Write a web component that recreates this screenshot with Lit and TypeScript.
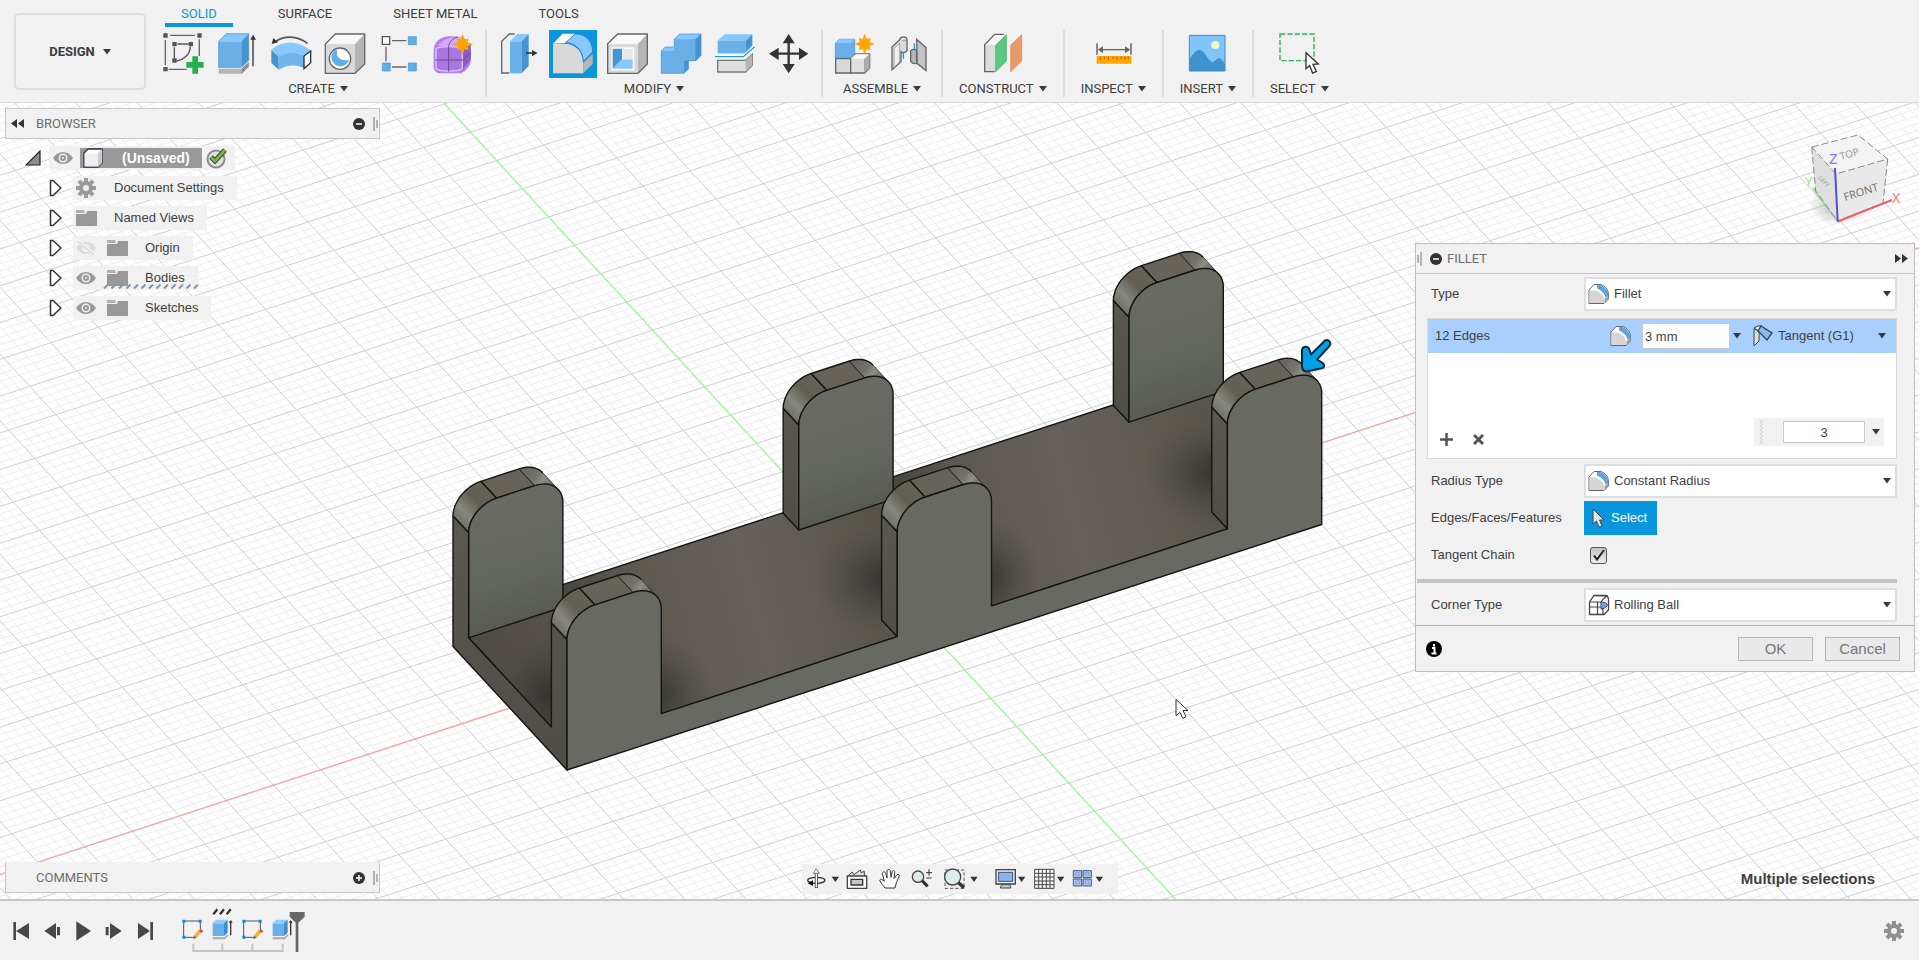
import { LitElement, html, svg, css, nothing } from "lit";
import { customElement, property, state } from "lit/decorators.js";
import { classMap } from "lit/directives/class-map.js";

type Pt = [number, number];

/* ---------- scene geometry ---------- */

const ORIGIN: Pt = [886.7, 584.4];
const AXIS_X: Pt = [47.17, -15.4];
const AXIS_Y: Pt = [26, 28.3];
const DEPTH: Pt = [-15.6, -16.8];
const EDGE: Pt = [28, -9.1];
const RISE = 25.6;
const FLOOR = 105;
const WIDTH = 94.3;
const FRONT: Pt[] = [[567, 639], [897.2, 531.2], [1227.4, 423.4]];
const BACK: Pt[] = FRONT.map(([x, y]) => [x - 98.4, y - 106.7] as Pt);

const add = (a: Pt, b: Pt): Pt => [a[0] + b[0], a[1] + b[1]];
const str = (pts: Pt[]) => pts.map((p) => `${p[0].toFixed(1)},${p[1].toFixed(1)}`).join(" ");
const rad = (d: number) => (d * Math.PI) / 180;

function gridPath(axis: Pt, across: Pt, divisions: number, skipMajor: boolean) {
  let d = "";
  for (let i = -45 * divisions; i <= 45 * divisions; i++) {
    if (skipMajor && i % divisions === 0) continue;
    const k = i / divisions;
    const x = ORIGIN[0] + across[0] * k;
    const y = ORIGIN[1] + across[1] * k;
    d += `M${(x - axis[0] * 50).toFixed(1)} ${(y - axis[1] * 50).toFixed(1)}L${(x + axis[0] * 50).toFixed(1)} ${(y + axis[1] * 50).toFixed(1)}`;
  }
  return d;
}

/* arc of the left rounded shoulder, from the vertical edge to the flat top */
function leftArc(a: Pt): Pt[] {
  const c: Pt = [a[0] + EDGE[0], a[1] + EDGE[1]];
  return Array.from({ length: 13 }, (_, i) => {
    const t = rad(180 - i * 7.5);
    return [c[0] + Math.cos(t) * EDGE[0], c[1] + Math.cos(t) * EDGE[1] - Math.sin(t) * RISE] as Pt;
  });
}

/* arc of the right rounded shoulder, down to the given angle */
function rightArc(a: Pt, end = 0): Pt[] {
  const w: Pt = [WIDTH - EDGE[0], (-(WIDTH - EDGE[0]) * 15.4) / 47.17];
  const c: Pt = [a[0] + w[0], a[1] + w[1]];
  return Array.from({ length: 13 }, (_, i) => {
    const t = rad(90 - ((90 - end) * i) / 12);
    return [c[0] + Math.cos(t) * EDGE[0], c[1] + Math.cos(t) * EDGE[1] - Math.sin(t) * RISE] as Pt;
  });
}

const shift = (pts: Pt[]) => pts.map((p) => add(p, DEPTH));
const postOutline = (a: Pt): Pt[] => {
  const r = rightArc(a);
  const end = r[r.length - 1];
  return [[a[0], a[1] + FLOOR], ...leftArc(a), ...r, [end[0], a[1] + FLOOR - 30.8]];
};

function postTop(a: Pt) {
  const l = leftArc(a);
  const r = rightArc(a, 33);
  const flat: Pt[] = [l[12], r[0]];
  return svg`
    <polygon class="edge" fill="url(#shoulderL)" points=${str([...l, ...shift(l).reverse()])}></polygon>
    <polygon class="edge" fill="#67625a" points=${str([...flat, ...shift(flat).reverse()])}></polygon>
    <polygon fill="url(#shoulderR)" points=${str([...r, ...shift(r).reverse()])}></polygon>
    <polyline class="edge" fill="none" points=${str(shift(r))}></polyline>
    <polyline class="edge thin" fill="none" points=${str([r[12], shift(r)[12]])}></polyline>`;
}

function postSide(a: Pt) {
  const b: Pt = [a[0], a[1] + FLOOR];
  return svg`<polygon class="edge" fill="url(#side)" points=${str([a, b, add(b, DEPTH), add(a, DEPTH)])}></polygon>`;
}

@customElement("cad-scene")
class CadScene extends LitElement {
  static styles = css`
    :host { display: block; }
    svg { display: block; width: 100%; height: 100%; background: #fefefe; }
    .edge { stroke: #15150f; stroke-width: 1.4; stroke-linejoin: round; }
    .thin { stroke-width: 0.7; }
    .minor { stroke: #eeeeee; stroke-width: 1; fill: none; }
    .major { stroke: #cfcfcf; stroke-width: 1; fill: none; }
  `;

  render() {
    const floor: Pt[] = [[453, 620], [567, 744], [1322, 497.5], [1208, 373.5]];
    const side: Pt[] = [
      add(BACK[0], DEPTH), BACK[0], [BACK[0][0], BACK[0][1] + FLOOR], [551.4, 726.6],
      add(FRONT[0], DEPTH), FRONT[0], [567, 769.5], [453, 646],
    ];
    const front: Pt[] = [[567, 769.5], ...FRONT.flatMap(postOutline), [1321.7, 524]];
    return html`
      <svg viewBox="0 102 1919 797" preserveAspectRatio="xMidYMid slice" role="img" aria-label="Model view">
        <defs>
          <linearGradient id="shoulderL" x1="0" y1="1" x2="0.9" y2="0">
            <stop offset="0" stop-color="#55534c"></stop>
            <stop offset="0.14" stop-color="#6c6d66"></stop>
            <stop offset="0.36" stop-color="#86877f"></stop>
            <stop offset="0.6" stop-color="#625e54"></stop>
            <stop offset="1" stop-color="#696459"></stop>
          </linearGradient>
          <linearGradient id="shoulderR" x1="0" y1="0.2" x2="1" y2="0.6">
            <stop offset="0" stop-color="#67635a"></stop>
            <stop offset="0.45" stop-color="#74746c"></stop>
            <stop offset="0.65" stop-color="#8d8e87"></stop>
            <stop offset="1" stop-color="#5d5d56"></stop>
          </linearGradient>
          <linearGradient id="side" x1="0" y1="0" x2="0" y2="1">
            <stop offset="0" stop-color="#5a5850"></stop>
            <stop offset="1" stop-color="#4f4d47"></stop>
          </linearGradient>
          <linearGradient id="face" x1="0.4" y1="0" x2="0.6" y2="1">
            <stop offset="0" stop-color="#6a6b65"></stop>
            <stop offset="0.6" stop-color="#63655f"></stop>
            <stop offset="1" stop-color="#54564f"></stop>
          </linearGradient>
          <linearGradient id="base" gradientUnits="userSpaceOnUse" x1="460" y1="640" x2="1300" y2="420">
            <stop offset="0" stop-color="#4f4b44"></stop>
            <stop offset="0.16" stop-color="#59554d"></stop>
            <stop offset="0.34" stop-color="#66615a"></stop>
            <stop offset="0.52" stop-color="#56524a"></stop>
            <stop offset="0.72" stop-color="#66615a"></stop>
            <stop offset="0.9" stop-color="#59554d"></stop>
            <stop offset="1" stop-color="#504c45"></stop>
          </linearGradient>
          <radialGradient id="dark">
            <stop offset="0" stop-color="#2f2e2b" stop-opacity="0.85"></stop>
            <stop offset="0.35" stop-color="#383733" stop-opacity="0.6"></stop>
            <stop offset="1" stop-color="#504d46" stop-opacity="0"></stop>
          </radialGradient>
          <clipPath id="floorClip"><polygon points=${str(floor)}></polygon></clipPath>
        </defs>

        <path class="minor" d=${gridPath(AXIS_X, AXIS_Y, 5, true)}></path>
        <path class="minor" d=${gridPath(AXIS_Y, AXIS_X, 5, true)}></path>
        <path class="major" d=${gridPath(AXIS_X, AXIS_Y, 1, false)}></path>
        <path class="major" d=${gridPath(AXIS_Y, AXIS_X, 1, false)}></path>
        <path d="M-60 893.6L2020 214.5" stroke="#ffa0a0" stroke-width="1.2"></path>
        <path d="M440 98.4L1190 914.5" stroke="#90ff90" stroke-width="1.2"></path>

        <polygon class="edge" fill="url(#base)" points=${str(floor)}></polygon>
        <g clip-path="url(#floorClip)">
          <ellipse cx="550" cy="694" rx="64" ry="66" fill="url(#dark)"></ellipse>
          <ellipse cx="654" cy="694" rx="62" ry="60" fill="url(#dark)"></ellipse>
          <ellipse cx="886" cy="578" rx="74" ry="58" fill="url(#dark)"></ellipse>
          <ellipse cx="984" cy="576" rx="60" ry="60" fill="url(#dark)"></ellipse>
          <ellipse cx="1216" cy="472" rx="74" ry="58" fill="url(#dark)"></ellipse>
          <ellipse cx="570" cy="590" rx="70" ry="34" fill="url(#dark)" opacity="0.4"></ellipse>
          <ellipse cx="900" cy="482" rx="80" ry="34" fill="url(#dark)" opacity="0.45"></ellipse>
        </g>

        ${BACK.map((a, i) => svg`
          ${i ? postSide(a) : nothing}
          ${postTop(a)}
          <polygon class="edge" fill="url(#face)" points=${str(postOutline(a))}></polygon>`)}

        <polygon class="edge" fill="url(#side)" points=${str(side)}></polygon>
        ${FRONT.map((a, i) => svg`${i ? postSide(a) : nothing}${postTop(a)}`)}
        <polygon class="edge" fill="#686963" points=${str(front)}></polygon>

        <path d="M1325 340 C1329 338 1332 343 1329 346 L1317 359 L1322 362 C1326 365 1324 368 1320 368 L1307 371 C1303 371 1302 369 1302 365 L1302 350 C1302 346 1307 345 1309 348 L1311 354 Z"
          fill="#00a0e8" stroke="#0b2b3c" stroke-width="2" stroke-linejoin="round"></path>
        <path d="M1176 699 L1176 715 L1180 712 L1183 718 L1186 716 L1183 710 L1188 710 Z" fill="#fff" stroke="#333" stroke-width="1"></path>
      </svg>`;
  }
}

/* ---------- shared drawings ---------- */

const caret = html`<svg class="caret" width="8" height="6" viewBox="0 0 8 6" aria-hidden="true"><path d="M0 0h8L4 5.5z" fill="#3a3a3a"></path></svg>`;

const burst = (x: number, y: number) => {
  const pts = Array.from({ length: 16 }, (_, i) => {
    const r = i % 2 ? 16 : i % 4 === 0 ? 31 : 25;
    const t = (i * Math.PI) / 8;
    return `${(x + Math.cos(t) * r).toFixed(1)},${(y + Math.sin(t) * r).toFixed(1)}`;
  });
  return svg`<polygon points=${pts.join(" ")} fill="#ffa400"></polygon>`;
};

const gearShape = (fill: string) => html`<svg width="20" height="20" viewBox="-10 -10 20 20" aria-hidden="true">
  ${[0, 45, 90, 135].map((r) => svg`<rect x="-2" y="-10" width="4" height="20" fill=${fill} transform="rotate(${r})"></rect>`)}
  <circle r="7" fill=${fill}></circle><circle r="3" fill="#f0f0f0"></circle></svg>`;

const filletIcon = html`<svg width="22" height="22" viewBox="0 0 22 22" aria-hidden="true">
  <path d="M1 20.500V7L6 1.500H12C17 2 20.500 7 20.500 12V16L16 20.500Z" fill="#fff" stroke="#666" stroke-width="1"></path>
  <path d="M1.500 20V7C9 7 15 10 16 16V20Z" fill="#d6d6d6"></path>
  <path d="M9 2C14 1 20 6 20.500 13L17 15C16 10 13 8 9 6Z" fill="#5aa5df"></path>
  <path d="M9 6C13 8 16 10 17 15" fill="none" stroke="#fff" stroke-width="1.300"></path>
  <path d="M16.500 20V16L20.500 13V16Z" fill="#a0a0a0"></path></svg>`;

const ballIcon = html`<svg width="22" height="22" viewBox="0 0 22 22" aria-hidden="true">
  <path d="M1.500 20.500V8L6 1.500H18C20 2 20.500 4 20.500 6V16L16 20.500Z" fill="#fdfdfd" stroke="#444" stroke-width="1.300"></path>
  <path d="M1.500 13H14M1.500 8H13C15 5 17 3 19 2M9.500 8V20.500M13 8C15 12 15 16 15 20.500M6 1.500L20 2" fill="none" stroke="#444" stroke-width="1.200"></path>
  <path d="M13 8C16 8 19 9 19.500 11C18 14 15 15 13 15Z" fill="#7d9fd6" stroke="#2d4a80" stroke-width="1"></path></svg>`;

const tangentIcon = html`<svg width="20" height="22" viewBox="0 0 20 22" aria-hidden="true">
  <path d="M1 4C5 5 7 8 6 12V16L1 21Z" fill="#ddd" stroke="#444"></path>
  <path d="M1 3L5 1H9L6 6Z" fill="#fff" stroke="#333"></path>
  <path d="M8 1L19 8L14 15L10 11L5 6Z" fill="#8db8e0" stroke="#24466e" stroke-width="1.300"></path></svg>`;

const eye = html`<svg width="20" height="14" viewBox="0 0 20 14" aria-hidden="true">
  <path d="M0 7C5 -1 15 -1 20 7C15 15 5 15 0 7Z" fill="#999"></path><circle cx="10" cy="7" r="4.500" fill="#f0f0f0"></circle>
  <circle cx="10" cy="7" r="3" fill="#999"></circle><circle cx="10" cy="7" r="1" fill="#eee"></circle></svg>`;
const eyeOff = html`<svg width="20" height="16" viewBox="0 0 20 16" aria-hidden="true">
  <path d="M0 8C5 0 15 0 20 8C15 16 5 16 0 8Z" fill="#dcdcdc"></path><circle cx="10" cy="8" r="4" fill="#f0f0f0"></circle>
  <circle cx="10" cy="8" r="2" fill="#dcdcdc"></circle>
  <path d="M2 1L19 15" stroke="#f0f0f0" stroke-width="4"></path><path d="M1 1L18 15" stroke="#dcdcdc" stroke-width="1.500"></path></svg>`;
const folder = html`<svg width="21" height="18" viewBox="0 0 21 18" aria-hidden="true">
  <path d="M0 1H8L9 4H0Z" fill="#b0b0b0"></path><path d="M0 5H10L11 2H21V17H0Z" fill="#999"></path></svg>`;
const closedArrow = html`<svg width="14" height="18" viewBox="0 0 14 18" aria-hidden="true"><path d="M1.500 1.500V16.500H4L12 9L4 1.500Z" fill="#fff" stroke="#333" stroke-width="1.500" stroke-linejoin="round"></path></svg>`;
const openArrow = html`<svg width="16" height="16" viewBox="0 0 16 16" aria-hidden="true"><path d="M15 1V15H1Z" fill="#8c8c8c" stroke="#222" stroke-width="1.200"></path></svg>`;

const grip = html`<svg width="5" height="14" viewBox="0 0 5 14" aria-hidden="true"><path d="M1 0V14M4 3V11" stroke="#777" stroke-width="1"></path></svg>`;

/* ---------- ribbon ---------- */

interface Tool { name: string; view: string; art: unknown; active?: boolean }
interface Group { label: string; tools: Tool[] }

const g1 = "#6fb4ea", top1 = "#86c8ff", dk1 = "#4594d0";

const GROUPS: Group[] = [
  {
    label: "CREATE",
    tools: [
      { name: "Create Sketch", view: "477 90 144 144", art: svg`
        <path d="M510 106H585M598 118V168M496 120V196M506 208H560" stroke="#666" stroke-width="4" fill="none"></path>
        <path d="M532 132H566M523 142V174M571 140C570 165 550 180 530 183" stroke="#555" stroke-width="4" fill="none"></path>
        <path d="M490 100h13v13h-13zM592 100h13v13h-13zM490 201h13v13h-13zM517 126h13v13h-13zM566 126h13v13h-13zM517 175h13v13h-13z" fill="#555"></path>
        <path d="M577 169h17v17h17v17h-17v18h-17v-18h-18v-17h18z" fill="#25b04f"></path>` },
      { name: "Extrude", view: "639 90 144 144", art: svg`
        <path d="M656 206L725 206L746 186V200L725 221H656Z" fill="#b5b5b5"></path><path d="M725 206L746 186V200L725 221Z" fill="#8d8d8d"></path>
        <path d="M656 124H724V202H656Z" fill="#6ab0e8"></path><path d="M656 124L679 101H746L724 124Z" fill=${top1}></path><path d="M724 124L746 101V181L724 202Z" fill=${dk1}></path>
        <path d="M656 202V124L679 101H746V181L724 202Z" fill="none" stroke="#3f8bc6" stroke-width="2"></path>
        <path d="M759 199V115" stroke="#333" stroke-width="4"></path><path d="M751 119L759 104L768 119Z" fill="#333"></path>` },
      { name: "Revolve", view: "801 90 144 144", art: svg`
        <path d="M826 126C850 106 890 106 923 130" stroke="#555" stroke-width="5" fill="none"></path><path d="M815 132L820 114L834 127Z" fill="#333"></path>
        <path d="M814 150C845 122 895 120 933 153L912 168C890 154 860 156 836 170Z" fill=${top1}></path>
        <path d="M814 150L836 170V209L814 189Z" fill=${dk1}></path>
        <path d="M836 170C860 155 890 155 912 168V205C890 192 860 194 836 209Z" fill=${g1}></path>
        <path d="M912 168L932 153V188L912 206Z" fill="#fff" stroke="#333" stroke-width="4"></path>` },
      { name: "Hole", view: "963 90 144 144", art: svg`
        <path d="M976 132H1065V220H976Z" fill="#d9d9d9"></path><path d="M976 132L1006 102H1094L1065 132Z" fill="#f8f8f8"></path><path d="M1065 132L1094 102V192L1065 220Z" fill="#b5b5b5"></path>
        <path d="M976 220V132L1006 102H1094V192L1065 220Z" fill="none" stroke="#666" stroke-width="4"></path>
        <circle cx="1020" cy="176" r="32" fill="#fff" stroke="#666" stroke-width="4"></circle>
        <path d="M1004 151A27 27 0 1 0 1047 180C1030 184 1004 176 1012 151Z" fill="#62aee6"></path>` },
      { name: "Rectangular Pattern", view: "1116 90 144 144", art: svg`
        <path d="M1167 122H1210M1149 140V184M1167 201H1210" stroke="#666" stroke-width="4"></path>
        <path d="M1138 110h22v23h-22z" fill="#fff" stroke="#555" stroke-width="4"></path>
        <path d="M1216 110h24v24h-24zM1216 189h24v24h-24zM1138 189h24v24h-24z" fill="#62aee6" stroke="#4594d0" stroke-width="2"></path>` },
      { name: "Create Form", view: "1284 90 144 144", art: svg`
        <path d="M1298 152C1298 125 1320 108 1350 109C1390 108 1410 125 1410 160V180C1408 200 1392 215 1380 220H1318C1304 220 1298 210 1298 198Z" fill="#b47fe8"></path>
        <path d="M1310 138C1330 108 1370 108 1395 116L1380 140Z" fill="#d3aafa"></path>
        <path d="M1384 145L1409 130V178L1384 212Z" fill="#8a5cc0"></path>
        <path d="M1305 145C1320 138 1370 138 1384 145V205C1375 216 1312 216 1305 205Z" fill="#a878e0" stroke="#e0c4ff" stroke-width="4"></path>
        <path d="M1343 140V215M1303 180H1384L1410 158M1343 140C1345 125 1355 115 1370 111" stroke="#6e459c" stroke-width="3" fill="none"></path>
        ${burst(1385, 133)}` },
    ],
  },
  {
    label: "MODIFY",
    tools: [
      { name: "Press Pull", view: "45 90 144 144", art: svg`
        <path d="M65 124L88 102H106L90 124V219H65Z" fill="#eee"></path><path d="M88 219H65V124L88 102H104" fill="none" stroke="#666" stroke-width="4"></path>
        <path d="M90 124H125V220H90Z" fill="#6ab0e8"></path><path d="M90 124L112 102H146L125 124Z" fill=${top1}></path><path d="M125 124L146 102V198L125 220Z" fill=${dk1}></path>
        <path d="M138 159H160" stroke="#333" stroke-width="5"></path><path d="M156 150L173 159L156 169Z" fill="#333"></path>` },
      { name: "Fillet", view: "210 90 144 144", active: true, art: svg`
        <path d="M222 131L251 101H290L262 128Z" fill="#fff"></path>
        <path d="M222 131H256C290 131 312 155 313 190V220H222Z" fill="#d9d9d9"></path>
        <path d="M313 188L341 162V192L313 220Z" fill="#b5b5b5"></path>
        <path d="M260 128L288 102C320 100 341 125 341 155L313 185C312 150 290 130 260 128Z" fill="#86c8ff" stroke="#2a84c4" stroke-width="3"></path>` },
      { name: "Shell", view: "369 90 144 144", art: svg`
        <path d="M383 131H474V220H383Z" fill="#d9d9d9"></path><path d="M383 131L413 102H502L474 131Z" fill="#fafafa"></path><path d="M474 131L502 102V192L474 220Z" fill="#b5b5b5"></path>
        <path d="M383 220V131L413 102H502V192L474 220Z" fill="none" stroke="#666" stroke-width="4"></path>
        <path d="M394 142H463V211H394Z" fill="#fff"></path><path d="M398 146H426V178L398 206Z" fill=${dk1}></path><path d="M426 178H458V206H398Z" fill=${top1}></path><path d="M426 146H458V178H426Z" fill="#e8e8e8"></path>` },
      { name: "Combine", view: "531 90 144 144", art: svg`
        <path d="M544 153L556 141H583V118L599 102H663V166L648 182H625V207L612 220H544Z" fill="#6ab0e8"></path>
        <path d="M583 118L599 102H663L646 118Z" fill=${top1}></path><path d="M544 153L556 141H583V153Z" fill=${top1}></path>
        <path d="M646 118L663 102V166L646 182ZM612 184L625 180V207L612 220Z" fill=${dk1}></path>
        <path d="M544 153L556 141H583V118L599 102H663V166L648 182H625V207L612 220H544Z" fill="none" stroke="#3f8bc6" stroke-width="2"></path>` },
      { name: "Split Body", view: "693 90 144 144", art: svg`
        <path d="M713 122L733 103H817L797 122Z" fill=${top1}></path><path d="M713 122H797V160H713Z" fill="#6ab0e8"></path><path d="M797 122L817 103V136L797 158Z" fill=${dk1}></path>
        <path d="M705 170H790L824 140" fill="none" stroke="#fff" stroke-width="10"></path><path d="M705 170H790L824 140" fill="none" stroke="#1a9ae0" stroke-width="4"></path>
        <path d="M713 181H797L817 163V196L797 216H713Z" fill="#dedede" stroke="#777" stroke-width="4"></path><path d="M797 181L817 163V196L797 216Z" fill="#b5b5b5"></path>` },
      { name: "Move/Copy", view: "855 90 144 144", art: svg`
        <path d="M926 120V205M885 161H968" stroke="#333" stroke-width="7"></path>
        <path d="M908 130L926 102L944 130ZM908 192L926 220L944 192ZM896 143L867 161L896 180ZM957 143L985 161L957 180Z" fill="#333"></path>` },
    ],
  },
  {
    label: "ASSEMBLE",
    tools: [
      { name: "New Component", view: "1056 90 144 144", art: svg`
        <path d="M1070 176H1115V219H1070Z" fill="#d9d9d9" stroke="#666" stroke-width="4"></path>
        <path d="M1115 176L1130 162H1172V203L1157 219H1115Z" fill="#dedede" stroke="#666" stroke-width="4"></path><path d="M1155 178L1172 162V203L1155 219Z" fill="#aaa"></path><path d="M1115 176L1130 163H1170L1155 176Z" fill="#fafafa"></path>
        <path d="M1069 129L1081 118H1127V162L1115 174H1069Z" fill="#6ab0e8" stroke="#3f8bc6" stroke-width="2"></path><path d="M1069 129L1081 118H1127L1115 129Z" fill=${top1}></path>
        ${burst(1157, 132)}` },
      { name: "Joint", view: "1218 90 144 144", art: svg`
        <path d="M1239 141L1262 119C1265 108 1282 108 1284 118V152C1280 160 1268 158 1266 156V185L1239 209Z" fill="#dadada" stroke="#666" stroke-width="4"></path>
        <path d="M1245 146L1262 130V186L1245 202ZM1268 122H1282" fill="#efefef" stroke="#888" stroke-width="2"></path>
        <path d="M1313 118L1341 143V212L1314 190Z" fill="#c4c4c4" stroke="#666" stroke-width="4"></path>
        <path d="M1295 152C1300 146 1310 148 1313 152V190C1306 192 1298 188 1295 184Z" fill="#b5b5b5" stroke="#666" stroke-width="4"></path>
        <path d="M1273 155V176M1306 130V152" stroke="#1a9ae0" stroke-width="4"></path>` },
    ],
  },
  {
    label: "CONSTRUCT",
    tools: [
      { name: "Offset Plane", view: "183 90 144 144", art: svg`
        <path d="M200 134H232V215H200Z" fill="#dcdcdc"></path><path d="M200 134L232 103H264L232 134Z" fill="#f8f8f8"></path>
        <path d="M230 215H200V134L230 103H258" fill="none" stroke="#666" stroke-width="4"></path>
        <path d="M233 136L265 104V183L233 215Z" fill="#5cc780" stroke="#2fae5b" stroke-width="2"></path>
        <path d="M278 136L311 104V183L278 215Z" fill="#e79a66" stroke="#d98045" stroke-width="2"></path>` },
    ],
  },
  {
    label: "INSPECT",
    tools: [
      { name: "Measure", view: "514 90 144 144", art: svg`
        <path d="M538 130V164M640 130V164" stroke="#555" stroke-width="4"></path><path d="M550 149H628" stroke="#666" stroke-width="4"></path>
        <path d="M540 149L556 139V159ZM638 149L622 139V159Z" fill="#666"></path>
        <path d="M537 168H641V191H537Z" fill="#ffa400"></path>
        <path d="M548 170v9M560 170v7M572 170v9M586 170v7M598 170v9M610 170v7M622 170v9M632 170v7" stroke="#a06400" stroke-width="3"></path>` },
    ],
  },
  {
    label: "INSERT",
    tools: [
      { name: "Canvas", view: "795 90 144 144", art: svg`
        <path d="M811 106H918V213H811Z" fill="#80c6fb"></path>
        <path d="M811 178C822 160 834 148 843 150C856 152 866 180 880 187C888 186 894 172 902 174C910 178 914 186 918 192V213H811Z" fill="#3f92cd"></path>
        <circle cx="889" cy="135" r="12" fill="#f6f6c4"></circle><path d="M811 106H918V213H811Z" fill="none" stroke="#3c8dca" stroke-width="3"></path>` },
    ],
  },
  {
    label: "SELECT",
    tools: [
      { name: "Select", view: "1063 90 144 144", art: svg`
        <path d="M1078 102H1180V182H1078Z" fill="none" stroke="#27b553" stroke-width="4" stroke-dasharray="16 6"></path>
        <path d="M1156 158V206L1167 197L1176 219L1187 214L1177 193L1193 192Z" fill="#fff" stroke="#333" stroke-width="4"></path>` },
    ],
  },
];

@customElement("cad-ribbon")
class CadRibbon extends LitElement {
  @state() private tab = "SOLID";

  static styles = css`
    :host { display: block; background: #f1f1f1; border-bottom: 1px solid #dcdcdc; font: 13px/16px Roboto, sans-serif; color: #3c3c3c; }
    button { font: inherit; color: inherit; background: none; border: 0; padding: 0; margin: 0; cursor: pointer; }
    .bar { display: flex; align-items: stretch; gap: 5px; padding-left: 14px; }
    .design { display: flex; align-items: center; justify-content: center; gap: 8px; width: 132px; margin: 13px 0 12px; border: 2px solid #dedede; border-radius: 5px; font-weight: 700; box-sizing: border-box; }
    .tabs { display: flex; gap: 29px; padding-left: 14px; }
    .tab { padding: 6px 16px 1px; border-bottom: 4px solid transparent; }
    .tab.on { color: #0a96dc; border-bottom-color: #0a96dc; }
    .groups { display: flex; padding: 3px 0 5px; }
    .group { display: flex; flex-direction: column; align-items: center; padding: 0 8px; }
    .group + .group { border-left: 2px solid #dcdcdc; }
    .tools { display: flex; gap: 6px; }
    .tool { width: 48px; height: 48px; }
    .tool.on { background: #0a96dc; }
    .tool svg { display: block; }
    .label { display: flex; align-items: center; gap: 5px; padding: 3px 8px 0; }
  `;

  render() {
    return html`<header class="bar">
      <button class="design">DESIGN ${caret}</button>
      <div>
        <nav class="tabs" aria-label="Workspace tabs">
          ${["SOLID", "SURFACE", "SHEET METAL", "TOOLS"].map((t) => html`
            <button class=${classMap({ tab: true, on: this.tab === t })} @click=${() => (this.tab = t)}>${t}</button>`)}
        </nav>
        <div class="groups">
          ${GROUPS.map((g) => html`<div class="group">
            <div class="tools">
              ${g.tools.map((t) => html`<button class=${classMap({ tool: true, on: !!t.active })} title=${t.name} aria-label=${t.name}>
                <svg width="48" height="48" viewBox=${t.view} aria-hidden="true">${t.art}</svg></button>`)}
            </div>
            <button class="label">${g.label} ${caret}</button>
          </div>`)}
        </div>
      </div>
    </header>`;
  }
}

/* ---------- browser tree ---------- */

interface Node { name: string; kind: "gear" | "folder"; eye?: "on" | "off"; marked?: boolean }
const NODES: Node[] = [
  { name: "Document Settings", kind: "gear" },
  { name: "Named Views", kind: "folder" },
  { name: "Origin", kind: "folder", eye: "off" },
  { name: "Bodies", kind: "folder", eye: "on", marked: true },
  { name: "Sketches", kind: "folder", eye: "on" },
];

@customElement("cad-dock-title")
class CadDockTitle extends LitElement {
  @property() label = "";
  @property({ type: Boolean }) open = false;

  static styles = css`
    :host { display: flex; align-items: center; box-sizing: border-box; height: 31px; padding: 0 1px 0 5px; background: #f1f1f1; border: 1px solid #c6c6c6; font: 13px/16px Roboto, sans-serif; color: #6e6e6e; }
    .lead { width: 25px; display: flex; }
    h2 { flex: 1; margin: 0; font: inherit; }
    button { border: 0; padding: 0; background: none; display: flex; margin-right: 8px; }
  `;

  render() {
    return html`
      <span class="lead">${this.open ? html`<svg width="13" height="9" viewBox="0 0 13 9" aria-hidden="true"><path d="M6 0V9L0 4.500ZM13 0V9L7 4.500Z" fill="#333"></path></svg>` : nothing}</span>
      <h2>${this.label}</h2>
      <button aria-label=${this.open ? "Collapse" : "Expand"}>
        <svg width="12" height="12" viewBox="0 0 12 12" aria-hidden="true"><circle cx="6" cy="6" r="6" fill="#333"></circle>
          <path d=${this.open ? "M3 6H9" : "M3 6H9M6 3V9"} stroke="#fff" stroke-width="1.500"></path></svg>
      </button>${grip}`;
  }
}

@customElement("cad-browser")
class CadBrowser extends LitElement {
  static styles = css`
    :host { display: block; font: 13px/24px "Liberation Sans", Arial, sans-serif; color: #3f3f3f; }
    svg { display: block; }
    ul { list-style: none; margin: 7px 0 0; padding: 0; display: flex; flex-direction: column; gap: 6px; }
    li { display: flex; align-items: center; height: 24px; padding-left: 44px; }
    li.root { padding-left: 20px; }
    .twist { border: 0; background: none; padding: 0; width: 24px; display: flex; }
    .row { position: relative; display: flex; align-items: center; height: 24px; background: #f1f1f1; padding: 0 13px 0 3px; }
    .vis { border: 0; background: none; padding: 0; width: 31px; display: flex; }
    .pic { width: 38px; display: flex; }
    .root .row { padding: 0 7px 0 4px; }
    .root .vis { width: 27px; }
    .doc { display: flex; align-items: center; height: 20px; line-height: 20px; width: 122px; box-sizing: border-box; padding-left: 3px; background: #999; color: #fff; font-weight: 700; font-size: 14px; gap: 18px; margin-right: 4px; }
    .mark { position: absolute; left: 30px; bottom: 1px; }
  `;

  render() {
    return html`
      <cad-dock-title label="BROWSER" open></cad-dock-title>
      <ul>
        <li class="root">
          <button class="twist" aria-label="Collapse document">${openArrow}</button>
          <div class="row">
            <button class="vis" aria-label="Visibility">${eye}</button>
            <span class="doc">
              <svg width="21" height="20" viewBox="0 0 21 20" aria-hidden="true"><path d="M1 5L5 1H19V15L15 19H1Z" fill="#fff" stroke="#333" stroke-width="1.300"></path><path d="M15 5L19 1V15L15 19Z" fill="#c8ccd8"></path><path d="M1.700 5.500H15V18.500H1.700Z" fill="#eceef4"></path></svg>
              (Unsaved)</span>
            <svg width="22" height="21" viewBox="0 0 22 21" aria-hidden="true"><circle cx="10" cy="11" r="8.500" fill="#dfe1e8" stroke="#8c8c8c" stroke-width="2"></circle><path d="M5 9L9 13L19 2" fill="none" stroke="#2c4a1e" stroke-width="5"></path><path d="M5 9L9 13L19 2" fill="none" stroke="#7cb34a" stroke-width="3"></path></svg>
          </div>
        </li>
        ${NODES.map((n) => html`<li>
          <button class="twist" aria-label="Expand ${n.name}">${closedArrow}</button>
          <div class="row">
            ${n.eye ? html`<button class="vis" aria-label="Visibility of ${n.name}">${n.eye === "on" ? eye : eyeOff}</button>` : nothing}
            <span class="pic">${n.kind === "gear" ? gearShape("#999") : folder}</span>${n.name}
            ${n.marked ? html`<svg class="mark" width="98" height="5" viewBox="0 0 98 5" aria-hidden="true">
              ${Array.from({ length: 13 }, (_, i) => svg`<path d="M${i * 7.5 + 1} 4.500L${i * 7.5 + 5} 0.500" stroke="#7f93b4" stroke-width="2"></path>`)}</svg>` : nothing}
          </div>
        </li>`)}
      </ul>`;
  }
}

/* ---------- fillet dialog ---------- */

@customElement("cad-fillet")
class CadFillet extends LitElement {
  static styles = css`
    :host { display: block; box-sizing: border-box; width: 500px; background: #f1f1f1; border: 1px solid #bdbdbd; font: 13px/16px "Liberation Sans", Arial, sans-serif; color: #3f3f3f; }
    svg { display: block; }
    button, input, select { font: inherit; color: inherit; margin: 0; box-sizing: border-box; border-radius: 0; }
    header { display: flex; align-items: center; height: 29px; padding: 0 6px 0 1px; border-bottom: 1px solid #c6c6c6; }
    header button, .ops button { border: 0; background: none; padding: 0; }
    h2 { flex: 1; margin: 0 0 0 5px; font: 13px/16px Roboto, sans-serif; color: #6e6e6e; }
    .grip { width: 13px; }
    .row { display: flex; align-items: center; padding-left: 15px; height: 34px; margin: 3px 0; }
    .row > label, .row > .name { width: 153px; flex: none; }
    .combo { display: grid; align-items: center; width: 313px; }
    .combo > * { grid-area: 1 / 1; }
    .combo > svg { margin-left: 4px; pointer-events: none; }
    .combo > .caret { justify-self: end; margin-right: 6px; }
    select { appearance: none; width: 100%; height: 34px; padding: 0 0 0 28px; background: #fff; border: 2px solid #dedede; }
    .list { margin: 7px 17px 5px 11px; box-sizing: border-box; background: #fff; border: 1px solid #d9d9d9; height: 141px; display: flex; flex-direction: column; justify-content: space-between; }
    .item { display: flex; align-items: center; height: 34px; background: #a9cfff; padding-left: 7px; }
    .item label { width: 175px; }
    .item input { width: 88px; height: 26px; margin-left: 10px; padding: 0 2px; border: 1px solid #c9c9c9; background: #fff; }
    .item > .caret { margin: 0 12px 0 3px; }
    .item .combo { width: 142px; }
    .item .combo > svg { margin-left: 0; }
    .item .combo > .caret { margin-right: 9px; }
    .item select { height: 26px; background: none; border: 0; padding-left: 25px; }
    .ops { display: flex; align-items: flex-end; gap: 20px; padding: 0 12px 12px 12px; }
    .mini { display: flex; align-items: center; height: 28px; width: 130px; box-sizing: border-box; margin-left: auto; padding: 0 4px 0 5px; background: #f1f1f1; gap: 7px; }
    .mini input { width: 82px; height: 22px; margin-left: 12px; text-align: center; border: 1px solid #c9c9c9; background: #fff; padding: 0; }
    .pick { display: flex; align-items: center; gap: 6px; height: 34px; width: 73px; border: 0; padding: 0 0 0 8px; background: #0a96dc; color: #fff; }
    .check { appearance: none; width: 17px; height: 17px; margin-left: 6px; border: 1px solid #555; border-radius: 3px; background: linear-gradient(#c4c4c4, #ececec); }
    .box { display: grid; align-items: center; }
    .box > * { grid-area: 1 / 1; }
    .box svg { margin-left: 9px; pointer-events: none; }
    hr { margin: 7px 17px 5px 1px; height: 4px; border: 0; background: #c3c3c3; }
    footer { display: flex; align-items: center; gap: 12px; padding: 0 14px 0 10px; height: 45px; border-top: 1px solid #b0b0b0; }
    footer button { width: 75px; height: 24px; font-size: 15px; border: 1px solid #b5b5b5; background: #e9e9e9; color: #777; padding: 0; }
    .space { flex: 1; }
  `;

  private combo(id: string, value: string, icon: unknown) {
    return html`<div class="combo"><select id=${id}><option>${value}</option></select>${icon}${caret}</div>`;
  }

  render() {
    return html`
      <header>
        <span class="grip"><svg width="5" height="14" viewBox="0 0 5 14" aria-hidden="true"><path d="M1 3V11M4 0V14" stroke="#777"></path></svg></span>
        <button aria-label="Collapse"><svg width="12" height="12" viewBox="0 0 12 12" aria-hidden="true"><circle cx="6" cy="6" r="6" fill="#333"></circle><path d="M3 6H9" stroke="#fff" stroke-width="1.500"></path></svg></button>
        <h2>FILLET</h2>
        <button aria-label="Dock"><svg width="13" height="9" viewBox="0 0 13 9" aria-hidden="true"><path d="M0 0V9L6 4.500ZM7 0V9L13 4.500Z" fill="#333"></path></svg></button>
      </header>
      <div class="row"><label for="type">Type</label>${this.combo("type", "Fillet", filletIcon)}</div>
      <div class="list">
        <div class="item">
          <label for="radius">12 Edges</label>${filletIcon}
          <input id="radius" type="text" value="3 mm" />${caret}
          <div class="combo"><select aria-label="Continuity"><option>Tangent (G1)</option></select>${tangentIcon}${caret}</div>
        </div>
        <div class="ops">
          <button aria-label="Add set"><svg width="13" height="13" viewBox="0 0 13 13" aria-hidden="true"><path d="M6.500 0V13M0 6.500H13" stroke="#555" stroke-width="2.500"></path></svg></button>
          <button aria-label="Remove set"><svg width="11" height="13" viewBox="0 0 11 13" aria-hidden="true"><path d="M1 2L10 11M10 2L1 11" stroke="#555" stroke-width="3"></path></svg></button>
          <div class="mini">
            <svg width="5" height="24" viewBox="0 0 5 24" aria-hidden="true"><path d="M4 0L1 2L4 4L1 6L4 8L1 10L4 12L1 14L4 16L1 18L4 20L1 22L4 24" fill="none" stroke="#d4d4d4"></path></svg>
            <input aria-label="Radius value" type="text" value="3" />${caret}
          </div>
        </div>
      </div>
      <div class="row"><label for="radiusType">Radius Type</label>${this.combo("radiusType", "Constant Radius", filletIcon)}</div>
      <div class="row"><span class="name">Edges/Faces/Features</span>
        <button class="pick"><svg width="13" height="20" viewBox="0 0 13 20" aria-hidden="true"><path d="M1 1V16L4.500 13L7 19L10 18L7.500 12H12Z" fill="#e6e6e6" stroke="#444"></path></svg>Select</button></div>
      <div class="row"><label for="chain">Tangent Chain</label>
        <span class="box"><input class="check" id="chain" type="checkbox" checked />
          <svg width="12" height="12" viewBox="0 0 12 12" aria-hidden="true"><path d="M1 6.500L4 10.500L11 1" fill="none" stroke="#222" stroke-width="2"></path></svg></span></div>
      <hr />
      <div class="row"><label for="corner">Corner Type</label>${this.combo("corner", "Rolling Ball", ballIcon)}</div>
      <footer>
        <svg width="16" height="16" viewBox="0 0 16 16" role="img" aria-label="Information"><circle cx="8" cy="8" r="8" fill="#000"></circle><path d="M8 3V5.500M6 7H8.500V12M5.500 12.500H10.500" stroke="#fff" stroke-width="2" fill="none"></path></svg>
        <span class="space"></span>
        <button>OK</button><button>Cancel</button>
      </footer>`;
  }
}

/* ---------- view cube ---------- */

@customElement("cad-view-cube")
class CadViewCube extends LitElement {
  static styles = css`
    :host { display: block; }
    svg { display: block; }
    text { font-family: "Noto Sans", sans-serif; }
  `;
  render() {
    return html`<svg width="110" height="100" viewBox="1800 126 110 100" role="img" aria-label="View cube">
      <defs><radialGradient id="shade"><stop offset="0" stop-color="#888" stop-opacity="0.7"></stop><stop offset="1" stop-color="#aaa" stop-opacity="0"></stop></radialGradient></defs>
      <ellipse cx="1838" cy="205" rx="30" ry="20" fill="url(#shade)"></ellipse>
      <path d="M1813 187L1837.700 220" stroke="#7be07b" stroke-width="2"></path>
      <path d="M1811.700 146L1858 134L1887.700 158L1836 173Z" fill="#f3f3f3"></path>
      <path d="M1811.700 146L1836 173L1837.700 220L1815.700 190Z" fill="#dedede"></path>
      <path d="M1836 173L1887.700 158L1883 202L1837.700 220Z" fill="#e9e9e9"></path>
      <path d="M1811.700 146L1858 134L1887.700 158L1836 173ZM1811.700 146L1815.700 190L1837.700 220M1887.700 158L1883 202L1837.700 220" fill="none" stroke="#8a8a8a" stroke-dasharray="7 3"></path>
      <text x="1845" y="200" font-size="11" fill="#777" transform="rotate(-17 1845 200)">FRONT</text>
      <text x="1841" y="159" font-size="10" fill="#999" transform="rotate(-16 1841 159)">TOP</text>
      <text x="1818" y="177" font-size="6" fill="#999" transform="rotate(50 1818 177)">LEFT</text>
      <path d="M1837.700 220.500L1892 199" stroke="#f06060" stroke-width="2"></path>
      <path d="M1837.700 220.500L1835 167" stroke="#5050d8" stroke-width="2"></path>
      <text x="1829" y="163" font-size="15" fill="#8080ff">Z</text>
      <text x="1892" y="202" font-size="14" fill="#ff7a7a">X</text>
      <text x="1805" y="185" font-size="13" fill="#8cf08c">Y</text>
    </svg>`;
  }
}

/* ---------- navigation bar ---------- */

const tri = (x: number) => svg`<path d="M${x - 11} 80H${x + 11}L${x} 96Z" fill="#333"></path>`;
const NAV_ART = svg`
  <g fill="none" stroke="#333" stroke-width="4">
    <ellipse cx="76" cy="91" rx="26" ry="9"></ellipse><path d="M76 66V114" stroke="#444" stroke-width="9"></path><path d="M76 66V112" stroke="#fff" stroke-width="4"></path>
  </g>
  <path d="M67 70L76 56L85 70Z" fill="#fff" stroke="#444" stroke-width="2"></path><path d="M50 100L66 91V108Z" fill="#111"></path>${tri(133)}
  <path d="M170 78L184 66L188 74L208 60L210 68L220 64V78" fill="#ddd" stroke="#444" stroke-width="3"></path>
  <path d="M169 78H227V115H169Z" fill="#fff" stroke="#444" stroke-width="4"></path><path d="M180 88H215V105H180Z" fill="#c8c8c8" stroke="#333" stroke-width="4"></path>
  <path d="M282 114C275 104 268 98 266 90C268 86 274 88 280 94L274 70C276 64 282 64 284 70L288 84L288 62C290 57 296 57 298 62L300 82L304 64C306 60 312 62 311 68L309 86L318 74C322 71 326 74 325 78L316 98L312 114Z" fill="#fff" stroke="#333" stroke-width="3"></path>
  <path d="M393 92L410 109" stroke="#333" stroke-width="9"></path><circle cx="381" cy="80" r="17" fill="#dbeaea" stroke="#444" stroke-width="4"></circle>
  <path d="M405 68H423M414 58V77M406 84H422" stroke="#333" stroke-width="3"></path>
  <path d="M462 60H519V115H462Z" fill="none" stroke="#555" stroke-width="3" stroke-dasharray="10 6"></path>
  <path d="M500 96L519 113" stroke="#333" stroke-width="10"></path><circle cx="485" cy="81" r="24" fill="#dcecea" stroke="#444" stroke-width="4"></circle>${tri(549)}
  <path d="M615 59H673V102H615Z" fill="#e8e8e8" stroke="#444" stroke-width="4"></path><path d="M623 67H665V94H623Z" fill="#8fb3e8" stroke="#3a4f7a" stroke-width="3"></path><path d="M632 104H656L660 114H628Z" fill="#ccc" stroke="#444" stroke-width="3"></path>${tri(692)}
  <path d="M731 58H789V115H731ZM731 70H789M731 81H789M731 93H789M731 104H789M743 58V115M754 58V115M766 58V115M777 58V115" fill="#fafafa" stroke="#444" stroke-width="3"></path>${tri(809)}
  <g fill="#a9c3ec" stroke="#3e5c94" stroke-width="3"><path d="M847 62H872V83H847ZM876 62H901V83H876ZM847 87H872V108H847ZM876 87H901V108H876Z"></path>
  <path d="M854 68H865V77H854ZM883 68H894V77H883ZM854 93H865V102H854ZM883 93H894V102H883Z" stroke-width="2" stroke="#7c99cc"></path></g>${tri(925)}`;
const NAV: [string, number, number][] = [
  ["Orbit", 33, 156], ["Look At", 156, 243], ["Pan", 243, 345], ["Zoom", 345, 441], ["Fit", 441, 600],
  ["Display Settings", 600, 717], ["Grid and Snaps", 717, 831], ["Viewports", 831, 981],
];

@customElement("cad-nav")
class CadNav extends LitElement {
  static styles = css`
    :host { display: flex; background: #f1f1f1; }
    button { border: 0; padding: 0; background: none; display: block; }
    svg { display: block; }
  `;
  render() {
    return NAV.map(([name, a, b]) => html`<button title=${name} aria-label=${name}>
      <svg width=${(b - a) / 3} height="30" viewBox="${a} 42 ${b - a} 90" aria-hidden="true">${NAV_ART}</svg></button>`);
  }
}

/* ---------- timeline ---------- */

const PLAY: [string, number, string][] = [
  ["Go to start", 63, "M40 216H48V270H40ZM87 219V267L48 243Z"],
  ["Step back", 156, "M133 243L168 219V267ZM171 231H180V256H171Z"],
  ["Play", 249, "M229 214L273 243L229 272Z"],
  ["Step forward", 343, "M318 231H327V256H318ZM331 219L366 243L331 267Z"],
  ["Go to end", 438, "M417 219L453 243L417 267ZM454 216H462V270H454Z"],
];

const sketchArt = (x: number) => svg`
  <path d="M${x} 213H${x + 50}V240M${x} 213V262H${x + 30}" fill="none" stroke="#555" stroke-width="3"></path>
  <path d="M${x - 4} 209h9v9h-9zM${x + 45} 209h9v9h-9zM${x - 4} 257h9v9h-9z" fill="#0a8ae6"></path>
  <path d="M${x + 33} 262L${x + 50} 242" stroke="#f5b03c" stroke-width="11"></path><path d="M${x + 50} 246L${x + 55} 240" stroke="#f04040" stroke-width="10"></path><path d="M${x + 28} 266l4-8 6 6z" fill="#555"></path>`;
const extrudeArt = (x: number) => svg`
  <path d="M${x} 262H${x + 35}L${x + 46} 252V258L${x + 36} 268H${x}Z" fill="#aaa"></path>
  <path d="M${x} 220H${x + 34}V258H${x}Z" fill="#6ab0e8"></path><path d="M${x} 220L${x + 10} 209H${x + 45}L${x + 34} 220Z" fill="#8ecbff"></path><path d="M${x + 34} 220L${x + 45} 209V248L${x + 34} 258Z" fill="#3f8fd0"></path>
  <path d="M${x + 54} 256V214" stroke="#333" stroke-width="4"></path><path d="M${x + 48} 218l6-8 6 8z" fill="#333"></path>`;
const TRACK = svg`${sketchArt(551)}${extrudeArt(638)}${sketchArt(731)}${extrudeArt(818)}
  <path d="M640 193L652 178M660 193L672 178M680 193L692 178" stroke="#333" stroke-width="7"></path>
  <path d="M580 281V303H848V281M667 281V303M757 281V303" fill="none" stroke="#c4c4c4" stroke-width="6"></path>`;

@customElement("cad-timeline")
class CadTimeline extends LitElement {
  static styles = css`
    :host { display: flex; align-items: center; padding: 7px 15px 6px 6px; background: #f1f1f1; border-top: 2px solid #c8c8c8; }
    button { border: 0; padding: 0; background: none; display: block; }
    svg { display: block; }
    .play { display: flex; gap: 1px; }
    .items { display: flex; margin-left: 17px; }
    .marker { margin-left: -8px; }
    .settings { margin-left: auto; }
  `;
  render() {
    return html`
      <div class="play">${PLAY.map(([name, c, d]) => html`<button aria-label=${name}>
        <svg width="30" height="20" viewBox="${c - 45} 213 90 60" aria-hidden="true"><path d=${d} fill="#484848"></path></svg></button>`)}</div>
      <div class="items">
        ${["Sketch1", "Extrude1", "Sketch2", "Extrude2"].map((n, i) => html`<button aria-label=${n}>
          <svg width="30" height="46" viewBox="${531 + i * 90} 174 90 138" aria-hidden="true">${TRACK}</svg></button>`)}
        <svg class="marker" width="16" height="46" viewBox="868 174 48 138" aria-hidden="true"><path d="M870 186H915V200L896 218V306H888V218L870 200Z" fill="#666"></path></svg>
      </div>
      <button class="settings" aria-label="Timeline settings">${gearShape("#8f8f8f")}</button>`;
  }
}

/* ---------- application ---------- */

@customElement("app-root")
class AppRoot extends LitElement {
  static styles = css`
    :host { display: flex; flex-direction: column; height: 100vh; box-sizing: border-box; padding-right: 3px; background: #fff; }
    .viewport { position: relative; flex: 1; min-height: 0; overflow: hidden; }
    cad-scene { position: absolute; inset: 0; }
    cad-browser { position: absolute; left: 5px; top: 5px; width: 375px; }
    cad-view-cube { position: absolute; right: 9px; top: 24px; }
    cad-fillet { position: absolute; right: 4px; top: 140px; }
    .comments { position: absolute; left: 5px; bottom: 6px; width: 375px; border-top-color: #f1f1f1; }
    cad-nav { position: absolute; left: 50%; bottom: 5px; transform: translateX(-50%); }
    .status { position: absolute; right: 44px; bottom: 11px; font: 700 15px/18px "Liberation Sans", Arial, sans-serif; color: #3f3f3f; }
  `;
  render() {
    return html`
      <cad-ribbon></cad-ribbon>
      <main class="viewport">
        <cad-scene></cad-scene>
        <cad-browser></cad-browser>
        <cad-view-cube></cad-view-cube>
        <cad-fillet></cad-fillet>
        <cad-dock-title class="comments" label="COMMENTS"></cad-dock-title>
        <cad-nav></cad-nav>
        <div class="status">Multiple selections</div>
      </main>
      <cad-timeline></cad-timeline>`;
  }
}
